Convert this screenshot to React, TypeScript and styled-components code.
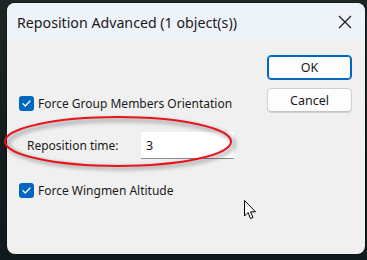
import React from "react";
import styled, { createGlobalStyle } from "styled-components";

const Global = createGlobalStyle`
  html, body { margin: 0; padding: 0; }
  body {
    width: 367px; height: 260px; overflow: hidden;
    background: #16201f;
    font-family: "Noto Sans", "Segoe UI", sans-serif;
  }
`;

const Desktop = styled.div`
  position: relative;
  width: 367px;
  height: 260px;
  box-sizing: border-box;
  padding: 3px 2px 6px 7px;
  background: linear-gradient(180deg, #1c2622 0%, #141d1d 60%, #0f1a1e 100%);
`;

const Window = styled.div`
  position: relative;
  width: 358px;
  height: 251px;
  border-radius: 8px;
  overflow: hidden;
  background: #f0f0f0;
  display: flex;
  flex-direction: column;
  box-shadow: 0 0 0 1px rgba(0,0,0,0.25);
`;

const TitleBar = styled.div`
  height: 37px;
  background: #eef2f9;
  display: flex;
  align-items: center;
  justify-content: space-between;
  padding: 0 12px 0 10px;
  flex: none;
`;

const Title = styled.div`
  font-size: 14.2px;
  color: #1a1a1a;
  padding-top: 1px;
`;

const Close = styled.div`
  width: 16px;
  height: 16px;
  display: flex;
  align-items: center;
  justify-content: center;
`;

const Body = styled.div`
  flex: 1;
  display: flex;
  padding: 15px 13px 0 12px;
`;

const Left = styled.div`
  flex: 1;
  display: flex;
  flex-direction: column;
  padding-top: 40px;
`;

const Right = styled.div`
  width: 85px;
  display: flex;
  flex-direction: column;
  gap: 8px;
`;

const Button = styled.div<{ $primary?: boolean }>`
  height: 25px;
  box-sizing: border-box;
  border-radius: 4px;
  background: #fdfdfd;
  border: 1px solid ${(p) => (p.$primary ? "#0067c0" : "#d0d0d0")};
  box-shadow: ${(p) => (p.$primary ? "inset 0 0 0 1px #0067c0" : "inset 0 -1px 0 #c4c4c4")};
  display: flex;
  align-items: center;
  justify-content: center;
  font-size: 12.5px;
  color: #1a1a1a;
`;

const CheckRow = styled.div<{ $mt?: number }>`
  display: flex;
  align-items: center;
  gap: 4px;
  height: 16px;
  margin-top: ${(p) => p.$mt ?? 0}px;
  font-size: 12px;
  color: #1a1a1a;
`;

const Box = styled.div`
  width: 15px;
  height: 15px;
  border-radius: 3px;
  background: #0067c0;
  display: flex;
  align-items: center;
  justify-content: center;
`;

const FieldRow = styled.div`
  display: flex;
  align-items: center;
  margin-top: 21px;
  padding-left: 8px;
  height: 27px;
`;

const Label = styled.div`
  width: 114px;
  font-size: 12px;
  color: #1a1a1a;
`;

const Input = styled.div`
  width: 93px;
  height: 27px;
  box-sizing: border-box;
  background: #ffffff;
  border-bottom: 1px solid #8a8a8a;
  padding-left: 5px;
  display: flex;
  align-items: center;
  font-size: 12.5px;
  color: #1a1a1a;
`;

const Ellipse = styled.svg`
  position: absolute;
  left: 0;
  top: 110px;
  pointer-events: none;
`;

const Cursor = styled.svg`
  position: absolute;
  left: 243px;
  top: 199px;
`;

const Check = () => (
  <svg width="11" height="11" viewBox="0 0 11 11">
    <path d="M2 5.8 L4.3 8 L9 3" fill="none" stroke="#fff" strokeWidth="1.3" strokeLinecap="round" strokeLinejoin="round" />
  </svg>
);

export default function App() {
  return (
    <>
      <Global />
      <Desktop>
        <Window>
          <TitleBar>
            <Title>Reposition Advanced (1 object(s))</Title>
            <Close>
              <svg width="14" height="14" viewBox="0 0 14 14">
                <path d="M1 1 L13 13 M13 1 L1 13" stroke="#1a1a1a" strokeWidth="1.2" />
              </svg>
            </Close>
          </TitleBar>
          <Body>
            <Left>
              <CheckRow>
                <Box><Check /></Box>
                Force Group Members Orientation
              </CheckRow>
              <FieldRow>
                <Label>Reposition time:</Label>
                <Input>3</Input>
              </FieldRow>
              <CheckRow $mt={23}>
                <Box><Check /></Box>
                Force Wingmen Altitude
              </CheckRow>
            </Left>
            <Right>
              <Button $primary>OK</Button>
              <Button>Cancel</Button>
            </Right>
          </Body>
        </Window>
        <Ellipse width="250" height="65" viewBox="0 0 250 65">
          <defs>
            <filter id="sh" x="-10%" y="-30%" width="130%" height="160%">
              <feGaussianBlur stdDeviation="2" />
            </filter>
          </defs>
          <ellipse cx="121" cy="34" rx="113" ry="24" fill="none" stroke="rgba(0,0,0,0.35)" strokeWidth="3" filter="url(#sh)" />
          <ellipse cx="118" cy="31.5" rx="113" ry="24.5" fill="none" stroke="#e8141b" strokeWidth="2" />
        </Ellipse>
        <Cursor width="14" height="22" viewBox="0 0 14 22">
          <path d="M1.5 1.5 L1.5 17 L5 13.5 L7.5 19.5 L10 18.5 L7.5 12.8 L12.5 12.8 Z" fill="#fff" stroke="#000" strokeWidth="1" strokeLinejoin="round" />
        </Cursor>
      </Desktop>
    </>
  );
}
